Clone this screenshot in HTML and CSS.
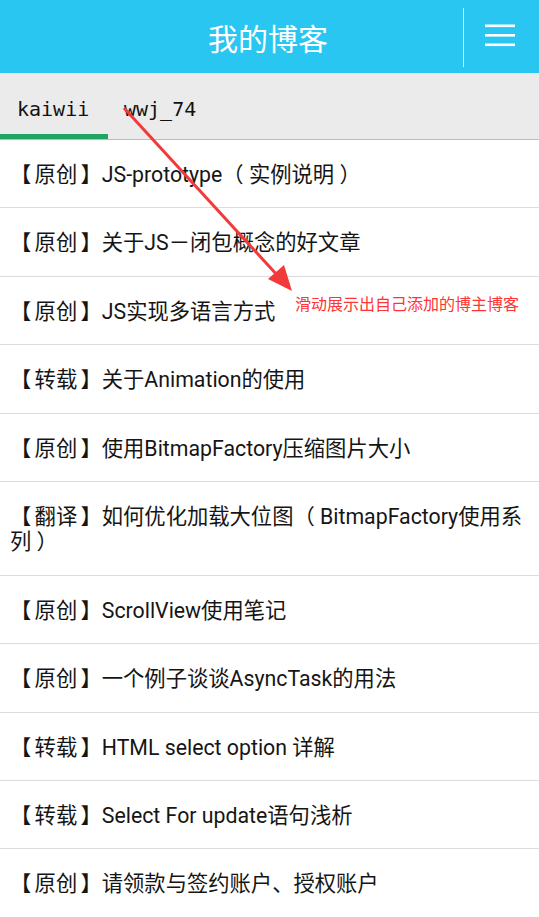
FILE: index.html
```html
<!DOCTYPE html>
<html lang="zh">
<head>
<meta charset="utf-8">
<link rel="stylesheet" href="styles.css">
</head>
<body>
<div class="app">
  <header class="topbar">
    <div class="title">我的博客</div>
    <div class="menu">
      <svg width="32" height="24" viewBox="0 0 32 24"><rect x="1" y="1.5" width="30" height="2.6" fill="#fff"/><rect x="1" y="11" width="30" height="2.6" fill="#fff"/><rect x="1" y="20.5" width="30" height="2.6" fill="#fff"/></svg>
    </div>
  </header>
  <nav class="tabs">
    <div class="tab active">kaiwii</div>
    <div class="tab">wwj_74</div>
  </nav>
  <ul class="list">
    <li><span class="tag">【 原创 】</span>JS-prototype（ 实例说明 ）</li>
    <li><span class="tag">【 原创 】</span>关于JS－闭包概念的好文章</li>
    <li><span class="tag">【 原创 】</span>JS实现多语言方式</li>
    <li><span class="tag">【 转载 】</span>关于Animation的使用</li>
    <li><span class="tag">【 原创 】</span>使用BitmapFactory压缩图片大小</li>
    <li><span class="tag">【 翻译 】</span>如何优化加载大位图（ BitmapFactory使用系列 ）</li>
    <li><span class="tag">【 原创 】</span>ScrollView使用笔记</li>
    <li><span class="tag">【 原创 】</span>一个例子谈谈AsyncTask的用法</li>
    <li><span class="tag">【 转载 】</span>HTML select option 详解</li>
    <li><span class="tag">【 转载 】</span>Select For update语句浅析</li>
    <li><span class="tag">【 原创 】</span>请领款与签约账户、授权账户</li>
  </ul>
  <svg class="arrow" width="539" height="917" viewBox="0 0 539 917">
    <line x1="124" y1="108" x2="278" y2="276" stroke="#f23a3a" stroke-width="3"/>
    <polygon points="292,291 268,279 284,265" fill="#f23a3a"/>
  </svg>
  <div class="note">滑动展示出自己添加的博主博客</div>
</div>
</body>
</html>
```
FILE: styles.css
```css
html, body {
  margin: 0;
  padding: 0;
  background: #fff;
}
.app {
  position: relative;
  width: 539px;
  height: 917px;
  overflow: hidden;
  font-family: "Roboto", "Noto Sans CJK SC", sans-serif;
}
.topbar {
  height: 73px;
  background: #29c6f2;
  display: flex;
  align-items: center;
}
.title {
  flex: 1;
  text-align: center;
  color: #fff;
  font-size: 30px;
  padding-left: 73px;
}
.menu {
  width: 75px;
  height: 59px;
  border-left: 1.5px solid rgba(255,255,255,0.85);
  display: flex;
  align-items: center;
  justify-content: center;
  margin-top: 2px;
}
.menu svg { margin-left: -4px; margin-top: -5px; }
.tabs {
  height: 66px;
  background: #ebebeb;
  border-bottom: 1px solid #bdbdbd;
  display: flex;
  align-items: stretch;
}
.tab {
  font-family: "DejaVu Sans Mono", monospace;
  font-size: 20px;
  color: #111;
  padding: 10px 17px 0 17px;
  display: flex;
  align-items: center;
  box-sizing: border-box;
  border-bottom: 5px solid transparent;
}
.tab.active {
  border-bottom-color: #1fa463;
  width: 108px;
}
.tab + .tab { padding-left: 16px; }
.list {
  list-style: none;
  margin: 0;
  padding: 0;
}
.list li {
  padding: 22px 16px 20px 10px;
  line-height: 25.4px;
  font-size: 21.3px;
  color: #151515;
  border-bottom: 1px solid #dcdcdc;
}
.tag {
  display: inline-block;
  word-spacing: -2px;
  line-height: 25.4px;
}
.arrow {
  position: absolute;
  left: 0;
  top: 0;
  pointer-events: none;
}
.note {
  position: absolute;
  left: 295px;
  top: 291px;
  font-size: 16px;
  color: #ff3434;
  font-family: "Noto Sans CJK SC", sans-serif;
}
```
